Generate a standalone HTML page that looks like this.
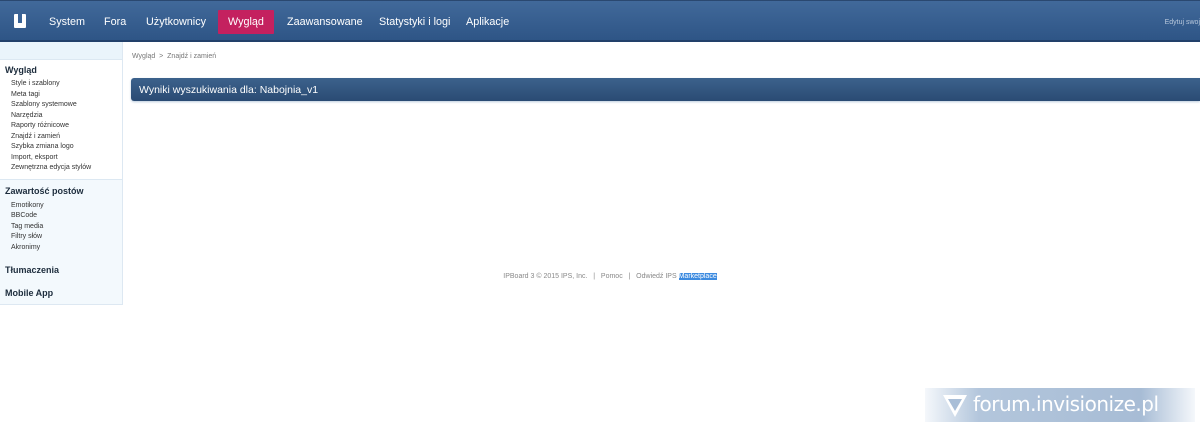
<!DOCTYPE html>
<html><head><meta charset="utf-8"><style>
*{margin:0;padding:0;box-sizing:border-box}
body{width:1200px;height:422px;background:#fff;font-family:"Liberation Sans",Arial,sans-serif;position:relative;overflow:hidden}
#hdr{position:absolute;left:0;top:0;width:1200px;height:42px;background:linear-gradient(#41699a,#2e5586);border-top:1px solid #2a4870;border-bottom:2px solid #22406a}
#hdr .logo{position:absolute;left:14px;top:13px;width:12px;height:14px;background:#fff;border-radius:1px}
#hdr .logo:after{content:"";position:absolute;left:4px;top:0;width:4px;height:9px;background:#3a6396}
#hdr a{position:absolute;top:15px;color:#fff;font-size:10.8px;text-decoration:none}
#hdr .act{top:9px;height:24px;background:#c4215f;padding:6px 10px 0;border-radius:1px}
#hdr .ed{right:0;top:18px;font-size:7px;color:#b8c8dc}
#side{position:absolute;left:0;top:42px;width:123px;height:263px;overflow:hidden;background:#fff;border-right:1px solid #dde8f2;border-bottom:1px solid #dde8f2}
#side .top{height:18px;background:#eaf4fb;border-bottom:1px solid #dce8f2}
#side h3{font-size:9px;font-weight:bold;color:#1c2c3c;padding-left:5px}
#side ul{list-style:none;padding-left:11px}
#side li{font-size:7px;color:#333;line-height:10.5px}
.sec2{background:#f3f9fd;border-top:1px solid #dce8f2;height:200px}
#bc{position:absolute;left:132px;top:53px;font-size:7px;color:#777}
#bar{position:absolute;left:131px;top:78px;width:1069px;height:23px;background:linear-gradient(#3c628c,#2a4b73);border-radius:3px 0 0 3px;color:#fff;font-size:10.5px;padding:6px 8px;box-shadow:0 1px 2px #bcd}
#ft{position:absolute;left:0;width:1220px;top:273px;text-align:center;font-size:7px;color:#888}
#ft span{background:#3d8be0;color:#fff}
#wm{position:absolute;left:925px;top:388px;width:270px;height:34px;background:linear-gradient(90deg,rgba(220,230,242,.3),#b3c6dc 20%,#a7bcd5 80%,rgba(220,230,242,.3));color:#fff;font-size:20px;padding:4px 0 0 48px;font-family:"DejaVu Sans",sans-serif;letter-spacing:-.5px;white-space:nowrap}
#wm svg{position:absolute;left:17px;top:6px}
</style></head><body>
<div id="hdr">
<div class="logo"></div>
<a style="left:49px">System</a>
<a style="left:104px">Fora</a>
<a style="left:146px">Użytkownicy</a>
<a class="act" style="left:218px">Wygląd</a>
<a style="left:287px">Zaawansowane</a>
<a style="left:379px">Statystyki i logi</a>
<a style="left:466px">Aplikacje</a>
<a class="ed">Edytuj swoj</a>
</div>
<div id="side">
<div class="top"></div>
<h3 style="margin-top:5px">Wygląd</h3>
<ul style="margin-top:4px;margin-bottom:5px"><li>Style i szablony</li><li>Meta tagi</li><li>Szablony systemowe</li><li>Narzędzia</li><li>Raporty różnicowe</li><li>Znajdź i zamień</li><li>Szybka zmiana logo</li><li>Import, eksport</li><li>Zewnętrzna edycja stylów</li></ul>
<div class="sec2">
<h3 style="padding-top:6px">Zawartość postów</h3>
<ul style="margin-top:5px"><li>Emotikony</li><li>BBCode</li><li>Tag media</li><li>Filtry słów</li><li>Akronimy</li></ul>
<h3 style="margin-top:12px">Tłumaczenia</h3>
<h3 style="margin-top:13px">Mobile App</h3>
</div>
</div>
<div id="bc">Wygląd &nbsp;&gt;&nbsp; Znajdź i zamień</div>
<div id="bar">Wyniki wyszukiwania dla: Nabojnia_v1</div>
<div id="ft">IPBoard 3 © 2015 IPS, Inc. &nbsp; | &nbsp; Pomoc &nbsp; | &nbsp; Odwiedź IPS <span>Marketplace</span></div>
<div id="wm"><svg width="26" height="24" viewBox="0 0 26 24"><path d="M1 1h24L13 23z" fill="#fff"/><path d="M6 5h14l-7 12z" fill="#a9bed7"/></svg>forum.invisionize.pl</div>
</body></html>
